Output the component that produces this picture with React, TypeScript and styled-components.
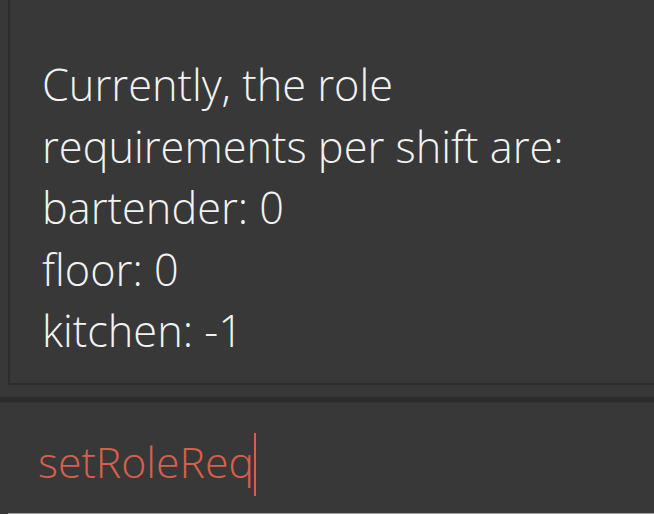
import { createGlobalStyle, styled } from "styled-components";

const GlobalStyle = createGlobalStyle`
    html, body {
        margin: 0;
        padding: 0;
        background-color: #383838;
    }
`;

const lines = [
    "Currently, the role",
    "requirements per shift are:",
    "bartender: 0",
    "floor: 0",
    "kitchen: -1",
];

const App = () => {
    return (
        <>
            <GlobalStyle />
            <Window>
                <ResultPane>
                    {lines.map((line) => (
                        <ResultLine key={line}>{line}</ResultLine>
                    ))}
                </ResultPane>
                <Splitter />
                <CommandPane>
                    <CommandText>setRoleReq</CommandText>
                    <Caret />
                </CommandPane>
                <FieldEdge />
            </Window>
        </>
    );
};

const Window = styled.div`
    width: 654px;
    height: 514px;
    overflow: hidden;
    display: flex;
    flex-direction: column;
    background-color: #383838;
    font-family: "Open Sans", "Segoe UI", sans-serif;
    font-weight: 300;
`;

const ResultPane = styled.div`
    margin-left: 8px;
    height: 385px;
    box-sizing: border-box;
    border-left: 2px solid #2c2c2c;
    border-bottom: 2px solid #2c2c2c;
    padding: 54px 0 0 32px;
`;

const ResultLine = styled.div`
    font-size: 43.3px;
    line-height: 61.6px;
    color: #f2f2f2;
    white-space: nowrap;
`;

const Splitter = styled.div`
    margin-top: 12px;
    height: 5px;
    background-color: #2c2c2c;
    border-bottom: 1px solid #333;
`;

const CommandPane = styled.div`
    flex: 1;
    display: flex;
    align-items: flex-start;
    padding: 30px 0 0 38px;
`;

const CommandText = styled.span`
    margin-top: 8px;
    font-size: 42.8px;
    color: #d8604b;
    line-height: 1;
`;

const Caret = styled.span`
    width: 2px;
    height: 63px;
    margin-left: 0;
    background-color: #d8604b;
`;

const FieldEdge = styled.div`
    margin-left: 8px;
    height: 1px;
    background-color: #a0a0a0;
`;

export default App;
